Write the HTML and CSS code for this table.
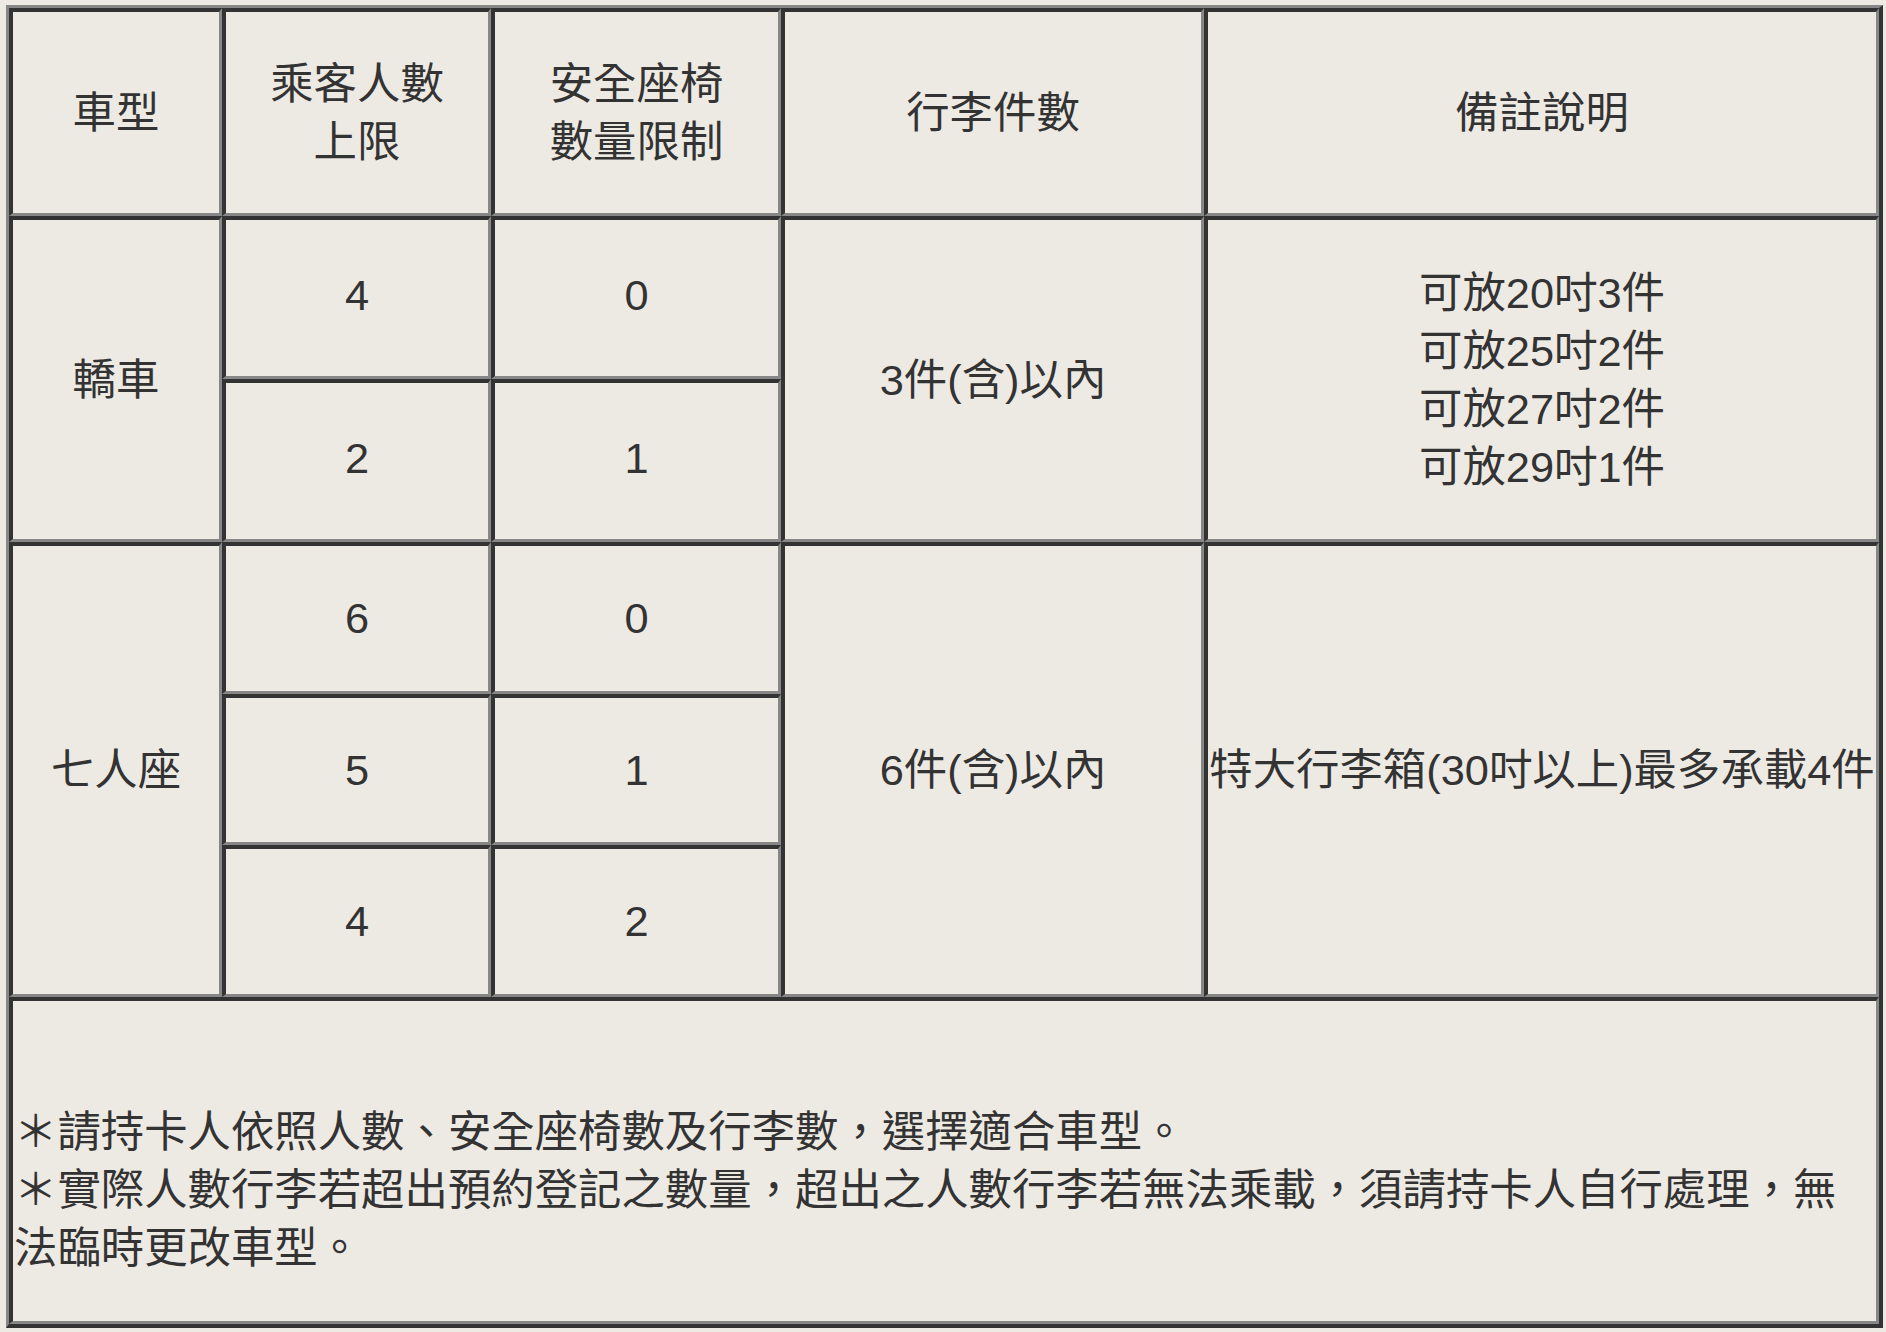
FILE: index.html
```html
<!DOCTYPE html>
<html lang="zh-Hant">
<head>
<meta charset="utf-8">
<title>車型說明</title>
<link rel="stylesheet" href="styles.css">
</head>
<body>
<table class="car-table">
  <thead>
    <tr class="r-head">
      <th class="c1">車型</th>
      <th class="c2">乘客人數<br>上限</th>
      <th class="c3">安全座椅<br>數量限制</th>
      <th class="c4">行李件數</th>
      <th class="c5">備註說明</th>
    </tr>
  </thead>
  <tbody>
    <tr class="r-sedan">
      <td rowspan="2">轎車</td>
      <td class="num-up">4</td>
      <td class="num-up">0</td>
      <td rowspan="2">3件(含)以內</td>
      <td rowspan="2">可放20吋3件<br>可放25吋2件<br>可放27吋2件<br>可放29吋1件</td>
    </tr>
    <tr class="r-sedan">
      <td class="num-up">2</td>
      <td class="num-up">1</td>
    </tr>
    <tr class="r-van">
      <td rowspan="3">七人座</td>
      <td>6</td>
      <td>0</td>
      <td rowspan="3">6件(含)以內</td>
      <td rowspan="3" class="nowrap">特大行李箱(30吋以上)最多承載4件</td>
    </tr>
    <tr class="r-van">
      <td>5</td>
      <td>1</td>
    </tr>
    <tr class="r-van">
      <td>4</td>
      <td>2</td>
    </tr>
    <tr class="r-foot">
      <td colspan="5" class="note"><br>＊請持卡人依照人數、安全座椅數及行李數，選擇適合車型。<br>＊實際人數行李若超出預約登記之數量，超出之人數行李若無法乘載，須請持卡人自行處理，無法臨時更改車型。</td>
    </tr>
  </tbody>
</table>
</body>
</html>
```

FILE: styles.css
```css
html, body {
  background: #edeae4;
}

body {
  margin: 5px 0 0 6px;
  font-family: "Liberation Sans", "Noto Sans CJK TC", sans-serif;
  color: #333333;
  font-size: 43.4px;
  line-height: 58px;
}

.car-table {
  box-sizing: border-box;
  width: 1877px;
  table-layout: fixed;
  border-collapse: separate;
  border-spacing: 0;
  border-top: 3px solid #878787;
  border-left: 3px solid #878787;
  border-bottom: 4px solid #333333;
  border-right: 4px solid #333333;
}

.car-table th,
.car-table td {
  box-sizing: border-box;
  padding: 1px;
  font-weight: normal;
  text-align: center;
  vertical-align: middle;
  border-top: 4px solid #333333;
  border-left: 4px solid #333333;
  border-bottom: 3px solid #878787;
  border-right: 3px solid #878787;
}

.c1 { width: 213px; }
.c2 { width: 269px; }
.c3 { width: 290px; }
.c4 { width: 423px; }
.c5 { width: 675px; }

.r-head { height: 208px; }
.r-sedan { height: 163px; }
.r-van { height: 151.5px; }
.r-foot { height: 327px; }

.car-table td.num-up {
  padding-bottom: 7px;
}

.nowrap {
  white-space: nowrap;
}

.car-table td.note {
  text-align: left;
}
```
